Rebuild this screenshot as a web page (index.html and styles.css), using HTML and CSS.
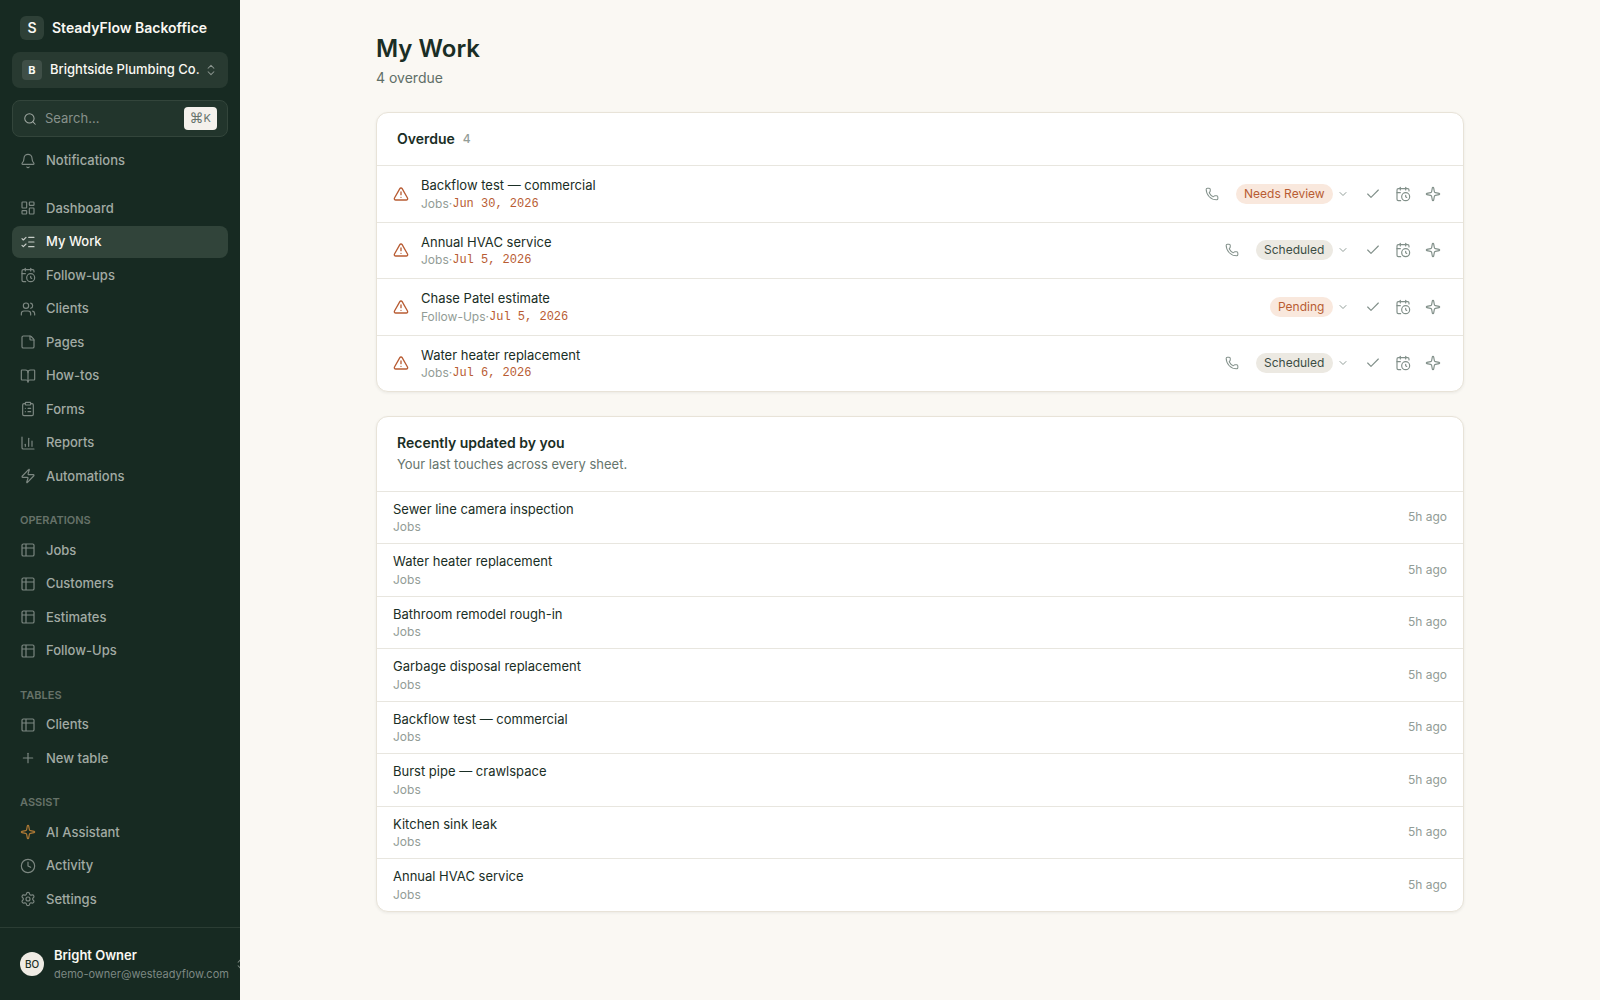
FILE: index.html
```html
<!DOCTYPE html>
<html lang="en">
<head>
    <meta charset="UTF-8">
    <meta name="viewport" content="width=device-width, initial-scale=1.0">
    <title>My Work - SteadyFlow Backoffice</title>
    <link rel="stylesheet" href="styles.css">
</head>
<body>

<svg class="sprite" aria-hidden="true">
    <symbol id="updown" viewBox="0 0 24 24"><path d="m7 15 5 5 5-5"/><path d="m7 9 5-5 5 5"/></symbol>
    <symbol id="search" viewBox="0 0 24 24"><path d="m21 21-4.34-4.34"/><circle cx="11" cy="11" r="8"/></symbol>
    <symbol id="bell" viewBox="0 0 24 24"><path d="M10.268 21a2 2 0 0 0 3.464 0"/><path d="M3.262 15.326A1 1 0 0 0 4 17h16a1 1 0 0 0 .74-1.673C19.41 13.956 18 12.499 18 8A6 6 0 0 0 6 8c0 4.499-1.411 5.956-2.738 7.326"/></symbol>
    <symbol id="dashboard" viewBox="0 0 24 24"><rect width="7" height="9" x="3" y="3" rx="1"/><rect width="7" height="5" x="14" y="3" rx="1"/><rect width="7" height="9" x="14" y="12" rx="1"/><rect width="7" height="5" x="3" y="16" rx="1"/></symbol>
    <symbol id="checks" viewBox="0 0 24 24"><path d="M13 5h8"/><path d="M13 12h8"/><path d="M13 19h8"/><path d="m3 17 2 2 4-4"/><path d="m3 7 2 2 4-4"/></symbol>
    <symbol id="calendar" viewBox="0 0 24 24"><path d="M16 14v2.2l1.6 1"/><path d="M16 2v4"/><path d="M21 7.5V6a2 2 0 0 0-2-2H5a2 2 0 0 0-2 2v14a2 2 0 0 0 2 2h3.5"/><path d="M3 10h5"/><path d="M8 2v4"/><circle cx="16" cy="16" r="6"/></symbol>
    <symbol id="users" viewBox="0 0 24 24"><path d="M16 21v-2a4 4 0 0 0-4-4H6a4 4 0 0 0-4 4v2"/><path d="M16 3.128a4 4 0 0 1 0 7.744"/><path d="M22 21v-2a4 4 0 0 0-3-3.87"/><circle cx="9" cy="7" r="4"/></symbol>
    <symbol id="note" viewBox="0 0 24 24"><path d="M21 9a2.4 2.4 0 0 0-.706-1.706l-3.588-3.588A2.4 2.4 0 0 0 15 3H5a2 2 0 0 0-2 2v14a2 2 0 0 0 2 2h14a2 2 0 0 0 2-2z"/><path d="M15 3v5a1 1 0 0 0 1 1h5"/></symbol>
    <symbol id="book" viewBox="0 0 24 24"><path d="M12 7v14"/><path d="M3 18a1 1 0 0 1-1-1V4a1 1 0 0 1 1-1h5a4 4 0 0 1 4 4 4 4 0 0 1 4-4h5a1 1 0 0 1 1 1v13a1 1 0 0 1-1 1h-6a3 3 0 0 0-3 3 3 3 0 0 0-3-3z"/></symbol>
    <symbol id="clipboard" viewBox="0 0 24 24"><rect width="8" height="4" x="8" y="2" rx="1"/><path d="M16 4h2a2 2 0 0 1 2 2v14a2 2 0 0 1-2 2H6a2 2 0 0 1-2-2V6a2 2 0 0 1 2-2h2"/><path d="M12 11h4"/><path d="M12 16h4"/><path d="M8 11h.01"/><path d="M8 16h.01"/></symbol>
    <symbol id="chart" viewBox="0 0 24 24"><path d="M3 3v16a2 2 0 0 0 2 2h16"/><path d="M18 17V9"/><path d="M13 17V5"/><path d="M8 17v-3"/></symbol>
    <symbol id="zap" viewBox="0 0 24 24"><path d="M4 14a1 1 0 0 1-.78-1.63l9.9-10.2a.5.5 0 0 1 .86.46l-1.92 6.02A1 1 0 0 0 13 10h7a1 1 0 0 1 .78 1.63l-9.9 10.2a.5.5 0 0 1-.86-.46l1.92-6.02A1 1 0 0 0 11 14z"/></symbol>
    <symbol id="table" viewBox="0 0 24 24"><path d="M9 3H5a2 2 0 0 0-2 2v4m6-6h10a2 2 0 0 1 2 2v4M9 3v18m0 0h10a2 2 0 0 0 2-2V9M9 21H5a2 2 0 0 1-2-2V9m0 0h18"/></symbol>
    <symbol id="plus" viewBox="0 0 24 24"><path d="M5 12h14"/><path d="M12 5v14"/></symbol>
    <symbol id="sparkle" viewBox="0 0 24 24"><path d="M11.017 2.814a1 1 0 0 1 1.966 0l1.051 5.558a2 2 0 0 0 1.594 1.594l5.558 1.051a1 1 0 0 1 0 1.966l-5.558 1.051a2 2 0 0 0-1.594 1.594l-1.051 5.558a1 1 0 0 1-1.966 0l-1.051-5.558a2 2 0 0 0-1.594-1.594l-5.558-1.051a1 1 0 0 1 0-1.966l5.558-1.051a2 2 0 0 0 1.594-1.594z"/></symbol>
    <symbol id="clock" viewBox="0 0 24 24"><path d="M12 6v6l4 2"/><circle cx="12" cy="12" r="10"/></symbol>
    <symbol id="gear" viewBox="0 0 24 24"><path d="M9.671 4.136a2.34 2.34 0 0 1 4.659 0 2.34 2.34 0 0 0 3.319 1.915 2.34 2.34 0 0 1 2.33 4.033 2.34 2.34 0 0 0 0 3.831 2.34 2.34 0 0 1-2.33 4.033 2.34 2.34 0 0 0-3.319 1.915 2.34 2.34 0 0 1-4.659 0 2.34 2.34 0 0 0-3.32-1.915 2.34 2.34 0 0 1-2.33-4.033 2.34 2.34 0 0 0 0-3.831A2.34 2.34 0 0 1 6.35 6.051a2.34 2.34 0 0 0 3.319-1.915"/><circle cx="12" cy="12" r="3"/></symbol>
    <symbol id="alert" viewBox="0 0 24 24"><path d="m21.73 18-8-14a2 2 0 0 0-3.48 0l-8 14A2 2 0 0 0 4 21h16a2 2 0 0 0 1.73-3"/><path d="M12 9v4"/><path d="M12 17h.01"/></symbol>
    <symbol id="phone" viewBox="0 0 24 24"><path d="M13.832 16.568a1 1 0 0 0 1.213-.303l.355-.465A2 2 0 0 1 17 15h3a2 2 0 0 1 2 2v3a2 2 0 0 1-2 2A18 18 0 0 1 2 4a2 2 0 0 1 2-2h3a2 2 0 0 1 2 2v3a2 2 0 0 1-.8 1.6l-.468.351a1 1 0 0 0-.292 1.233 14 14 0 0 0 6.392 6.384"/></symbol>
    <symbol id="down" viewBox="0 0 24 24"><path d="m6 9 6 6 6-6"/></symbol>
    <symbol id="check" viewBox="0 0 24 24"><path d="M20 6 9 17l-5-5"/></symbol>
</svg>

<div class="app">
    <aside class="sidebar">
        <div class="sidebar-top">
            <div class="brand"><span class="brand-mark">S</span>SteadyFlow Backoffice</div>
            <button class="workspace" type="button">
                <span class="workspace-mark">B</span>
                <span class="workspace-name">Brightside Plumbing Co.</span>
                <svg class="icon icon-sm"><use href="#updown"/></svg>
            </button>
            <label class="search">
                <svg class="icon icon-sm"><use href="#search"/></svg>
                <input type="text" placeholder="Search..." aria-label="Search">
                <kbd><span class="cmd">⌘</span>K</kbd>
            </label>
        </div>

        <nav class="nav">
            <div class="nav-group">
                <a class="nav-item" href="#"><svg class="icon"><use href="#bell"/></svg>Notifications</a>
            </div>
            <div class="nav-group">
                <a class="nav-item" href="#"><svg class="icon"><use href="#dashboard"/></svg>Dashboard</a>
                <a class="nav-item active" href="#" aria-current="page"><svg class="icon"><use href="#checks"/></svg>My Work</a>
                <a class="nav-item" href="#"><svg class="icon"><use href="#calendar"/></svg>Follow-ups</a>
                <a class="nav-item" href="#"><svg class="icon"><use href="#users"/></svg>Clients</a>
                <a class="nav-item" href="#"><svg class="icon"><use href="#note"/></svg>Pages</a>
                <a class="nav-item" href="#"><svg class="icon"><use href="#book"/></svg>How-tos</a>
                <a class="nav-item" href="#"><svg class="icon"><use href="#clipboard"/></svg>Forms</a>
                <a class="nav-item" href="#"><svg class="icon"><use href="#chart"/></svg>Reports</a>
                <a class="nav-item" href="#"><svg class="icon"><use href="#zap"/></svg>Automations</a>
            </div>
            <div class="nav-group">
                <h2 class="nav-title">Operations</h2>
                <a class="nav-item" href="#"><svg class="icon"><use href="#table"/></svg>Jobs</a>
                <a class="nav-item" href="#"><svg class="icon"><use href="#table"/></svg>Customers</a>
                <a class="nav-item" href="#"><svg class="icon"><use href="#table"/></svg>Estimates</a>
                <a class="nav-item" href="#"><svg class="icon"><use href="#table"/></svg>Follow-Ups</a>
            </div>
            <div class="nav-group">
                <h2 class="nav-title">Tables</h2>
                <a class="nav-item" href="#"><svg class="icon"><use href="#table"/></svg>Clients</a>
                <a class="nav-item" href="#"><svg class="icon"><use href="#plus"/></svg>New table</a>
            </div>
            <div class="nav-group">
                <h2 class="nav-title">Assist</h2>
                <a class="nav-item assistant" href="#"><svg class="icon"><use href="#sparkle"/></svg>AI Assistant</a>
                <a class="nav-item" href="#"><svg class="icon"><use href="#clock"/></svg>Activity</a>
                <a class="nav-item" href="#"><svg class="icon"><use href="#gear"/></svg>Settings</a>
            </div>
        </nav>

        <div class="sidebar-footer">
            <button class="account" type="button">
                <span class="avatar">BO</span>
                <span class="account-text">
                    <span class="account-name">Bright Owner</span>
                    <span class="account-email">demo-owner@westeadyflow.com</span>
                </span>
                <svg class="icon icon-sm"><use href="#updown"/></svg>
            </button>
        </div>
    </aside>

    <main class="main">
        <div class="content">
            <header class="page-header">
                <h1>My Work</h1>
                <p>4 overdue</p>
            </header>

            <section class="card">
                <div class="card-header">
                    <h2>Overdue <span class="count">4</span></h2>
                </div>
                <ul class="rows">
                    <li class="row task">
                        <svg class="icon alert"><use href="#alert"/></svg>
                        <div class="row-text">
                            <a class="row-title" href="#">Backflow test — commercial</a>
                            <div class="row-meta">Jobs<span class="dot">·</span><time class="due">Jun 30, 2026</time></div>
                        </div>
                        <button class="icon-btn" type="button" aria-label="Call"><svg class="icon icon-sm"><use href="#phone"/></svg></button>
                        <label class="status">
                            <select class="pill pill-warn" aria-label="Status"><option>Needs Review</option></select>
                            <svg class="icon icon-xs"><use href="#down"/></svg>
                        </label>
                        <div class="actions">
                            <button class="icon-btn" type="button" aria-label="Mark done"><svg class="icon"><use href="#check"/></svg></button>
                            <button class="icon-btn" type="button" aria-label="Reschedule"><svg class="icon"><use href="#calendar"/></svg></button>
                            <button class="icon-btn" type="button" aria-label="Ask AI"><svg class="icon"><use href="#sparkle"/></svg></button>
                        </div>
                    </li>
                    <li class="row task">
                        <svg class="icon alert"><use href="#alert"/></svg>
                        <div class="row-text">
                            <a class="row-title" href="#">Annual HVAC service</a>
                            <div class="row-meta">Jobs<span class="dot">·</span><time class="due">Jul 5, 2026</time></div>
                        </div>
                        <button class="icon-btn" type="button" aria-label="Call"><svg class="icon icon-sm"><use href="#phone"/></svg></button>
                        <label class="status">
                            <select class="pill" aria-label="Status"><option>Scheduled</option></select>
                            <svg class="icon icon-xs"><use href="#down"/></svg>
                        </label>
                        <div class="actions">
                            <button class="icon-btn" type="button" aria-label="Mark done"><svg class="icon"><use href="#check"/></svg></button>
                            <button class="icon-btn" type="button" aria-label="Reschedule"><svg class="icon"><use href="#calendar"/></svg></button>
                            <button class="icon-btn" type="button" aria-label="Ask AI"><svg class="icon"><use href="#sparkle"/></svg></button>
                        </div>
                    </li>
                    <li class="row task">
                        <svg class="icon alert"><use href="#alert"/></svg>
                        <div class="row-text">
                            <a class="row-title" href="#">Chase Patel estimate</a>
                            <div class="row-meta">Follow-Ups<span class="dot">·</span><time class="due">Jul 5, 2026</time></div>
                        </div>
                        <label class="status">
                            <select class="pill pill-warn" aria-label="Status"><option>Pending</option></select>
                            <svg class="icon icon-xs"><use href="#down"/></svg>
                        </label>
                        <div class="actions">
                            <button class="icon-btn" type="button" aria-label="Mark done"><svg class="icon"><use href="#check"/></svg></button>
                            <button class="icon-btn" type="button" aria-label="Reschedule"><svg class="icon"><use href="#calendar"/></svg></button>
                            <button class="icon-btn" type="button" aria-label="Ask AI"><svg class="icon"><use href="#sparkle"/></svg></button>
                        </div>
                    </li>
                    <li class="row task">
                        <svg class="icon alert"><use href="#alert"/></svg>
                        <div class="row-text">
                            <a class="row-title" href="#">Water heater replacement</a>
                            <div class="row-meta">Jobs<span class="dot">·</span><time class="due">Jul 6, 2026</time></div>
                        </div>
                        <button class="icon-btn" type="button" aria-label="Call"><svg class="icon icon-sm"><use href="#phone"/></svg></button>
                        <label class="status">
                            <select class="pill" aria-label="Status"><option>Scheduled</option></select>
                            <svg class="icon icon-xs"><use href="#down"/></svg>
                        </label>
                        <div class="actions">
                            <button class="icon-btn" type="button" aria-label="Mark done"><svg class="icon"><use href="#check"/></svg></button>
                            <button class="icon-btn" type="button" aria-label="Reschedule"><svg class="icon"><use href="#calendar"/></svg></button>
                            <button class="icon-btn" type="button" aria-label="Ask AI"><svg class="icon"><use href="#sparkle"/></svg></button>
                        </div>
                    </li>
                </ul>
            </section>

            <section class="card">
                <div class="card-header">
                    <h2>Recently updated by you</h2>
                    <p>Your last touches across every sheet.</p>
                </div>
                <ul class="rows">
                    <li class="row">
                        <div class="row-text"><a class="row-title" href="#">Sewer line camera inspection</a><div class="row-meta">Jobs</div></div>
                        <time class="ago">5h ago</time>
                    </li>
                    <li class="row">
                        <div class="row-text"><a class="row-title" href="#">Water heater replacement</a><div class="row-meta">Jobs</div></div>
                        <time class="ago">5h ago</time>
                    </li>
                    <li class="row">
                        <div class="row-text"><a class="row-title" href="#">Bathroom remodel rough-in</a><div class="row-meta">Jobs</div></div>
                        <time class="ago">5h ago</time>
                    </li>
                    <li class="row">
                        <div class="row-text"><a class="row-title" href="#">Garbage disposal replacement</a><div class="row-meta">Jobs</div></div>
                        <time class="ago">5h ago</time>
                    </li>
                    <li class="row">
                        <div class="row-text"><a class="row-title" href="#">Backflow test — commercial</a><div class="row-meta">Jobs</div></div>
                        <time class="ago">5h ago</time>
                    </li>
                    <li class="row">
                        <div class="row-text"><a class="row-title" href="#">Burst pipe — crawlspace</a><div class="row-meta">Jobs</div></div>
                        <time class="ago">5h ago</time>
                    </li>
                    <li class="row">
                        <div class="row-text"><a class="row-title" href="#">Kitchen sink leak</a><div class="row-meta">Jobs</div></div>
                        <time class="ago">5h ago</time>
                    </li>
                    <li class="row">
                        <div class="row-text"><a class="row-title" href="#">Annual HVAC service</a><div class="row-meta">Jobs</div></div>
                        <time class="ago">5h ago</time>
                    </li>
                </ul>
            </section>
        </div>
    </main>
</div>

</body>
</html>
```
FILE: styles.css
```css
* {
    box-sizing: border-box;
}
body {
    margin: 0;
    background: #faf8f3;
    color: #1a2e25;
    font-family: Inter, "Liberation Sans", sans-serif;
    font-size: 13px;
    line-height: 1.5;
}
h1, h2, p, ul {
    margin: 0;
    padding: 0;
}
a {
    color: inherit;
    text-decoration: none;
}
button, input, select {
    font: inherit;
    color: inherit;
    border: none;
    background: none;
    padding: 0;
    margin: 0;
}
button, select {
    cursor: pointer;
}
.sprite {
    display: none;
}
.icon {
    width: 16px;
    height: 16px;
    flex-shrink: 0;
    fill: none;
    stroke: currentColor;
    stroke-width: 1.75;
    stroke-linecap: round;
    stroke-linejoin: round;
}
.icon-sm {
    width: 14px;
    height: 14px;
}
.icon-xs {
    width: 12px;
    height: 12px;
}
.app {
    display: flex;
    min-height: 100vh;
}

/* sidebar */
.sidebar {
    position: sticky;
    top: 0;
    display: flex;
    flex-direction: column;
    flex-shrink: 0;
    width: 240px;
    height: 100vh;
    overflow: hidden;
    background: #172a22;
    color: #a2aaa4;
}
.sidebar-top {
    display: flex;
    flex-direction: column;
    gap: 12px;
    padding: 16px 12px 8px;
}
.brand {
    display: flex;
    align-items: center;
    gap: 8px;
    padding: 0 8px;
    line-height: 24px;
    font-size: 14px;
    font-weight: 600;
    color: #faf8f3;
    white-space: nowrap;
}
.brand-mark {
    width: 24px;
    height: 24px;
    border-radius: 6px;
    background: #2e4037;
    text-align: center;
}
.workspace {
    display: flex;
    align-items: center;
    gap: 8px;
    height: 36px;
    padding: 0 10px;
    border-radius: 8px;
    background: #283a31;
    color: #faf8f3;
    font-weight: 500;
    text-align: left;
    white-space: nowrap;
}
.workspace-mark {
    flex-shrink: 0;
    width: 20px;
    height: 20px;
    border-radius: 4px;
    background: #3f4f47;
    font-size: 11px;
    font-weight: 700;
    line-height: 20px;
    text-align: center;
}
.workspace-name {
    flex: 1;
    min-width: 0;
}
.workspace .icon {
    color: #8b958f;
}
.search {
    display: flex;
    align-items: center;
    gap: 8px;
    height: 37px;
    padding: 0 10px;
    border: 1px solid #33453b;
    border-radius: 8px;
    background: #22352c;
}
.search input {
    flex: 1;
    min-width: 0;
    outline: none;
}
.search input::placeholder {
    color: #87918b;
    opacity: 1;
}
.search kbd {
    display: flex;
    align-items: center;
    height: 23px;
    padding: 0 6px;
    border-radius: 4px;
    background: #f4f1ec;
    color: #66736c;
    font-family: inherit;
    font-size: 11px;
}
.cmd {
    font-family: "DejaVu Sans", sans-serif;
    font-size: 14px;
}
.nav {
    display: flex;
    flex-direction: column;
    flex: 1;
    gap: 16px;
    min-height: 0;
    padding: 0 12px;
    overflow: hidden;
}
.nav-group {
    display: flex;
    flex-direction: column;
    gap: 2px;
}
.nav-title {
    padding: 4px 8px;
    font-size: 11px;
    font-weight: 600;
    text-transform: uppercase;
    color: #667269;
}
.nav-item {
    display: flex;
    align-items: center;
    gap: 10px;
    padding: 6px 8px;
    border-radius: 8px;
    font-weight: 500;
}
.nav-item .icon {
    color: #7d8882;
}
.nav-item.active {
    background: #31443a;
    color: #faf8f3;
}
.nav-item.active .icon {
    color: #c8cdc8;
}
.nav-item.assistant .icon {
    color: #b07a35;
}
.sidebar-footer {
    padding: 12px;
    border-top: 1px solid #2b3d34;
}
.account {
    display: flex;
    align-items: center;
    gap: 10px;
    padding: 6px 8px;
    text-align: left;
    white-space: nowrap;
}
.account .icon {
    color: #7d8882;
}
.avatar {
    flex-shrink: 0;
    width: 24px;
    height: 24px;
    border-radius: 50%;
    background: #efebe4;
    color: #1a2e25;
    font-size: 10px;
    font-weight: 500;
    line-height: 24px;
    text-align: center;
}
.account-text {
    display: flex;
    flex-direction: column;
    flex-shrink: 0;
    width: 170px;
}
.account-name {
    font-weight: 600;
    color: #faf8f3;
}
.account-email {
    font-size: 11px;
    color: #7d8882;
}

/* page */
.main {
    flex: 1;
    min-width: 0;
}
.content {
    display: flex;
    flex-direction: column;
    gap: 24px;
    max-width: 1152px;
    margin: 0 auto;
    padding: 32px;
}
.page-header h1 {
    font-size: 24px;
    font-weight: 600;
    line-height: 34px;
}
.page-header p {
    margin-top: 2px;
    font-size: 14px;
    line-height: 20px;
    color: #5f6f67;
}
.card {
    border: 1px solid #e8e3d8;
    border-radius: 12px;
    background: #fff;
    box-shadow: 0 1px 3px rgba(26, 46, 37, 0.07);
}
.card-header {
    padding: 16px 20px;
    border-bottom: 1px solid #e8e6df;
}
.card-header h2 {
    display: flex;
    align-items: center;
    gap: 8px;
    font-size: 14px;
    font-weight: 600;
    line-height: 20px;
}
.card-header p {
    margin-top: 2px;
    color: #66756d;
}
.count {
    font-size: 12px;
    font-weight: 500;
    color: #939d97;
}
.rows {
    list-style: none;
}
.row {
    display: flex;
    align-items: center;
    gap: 8px;
    padding: 8px 16px;
    border-bottom: 1px solid #e8e6df;
}
.row:last-child {
    border-bottom: none;
}
.task {
    padding: 10px 16px;
}
.alert {
    margin-right: 4px;
    color: #b85c33;
    stroke-width: 2;
}
.row-text {
    flex: 1;
    min-width: 0;
}
.row-title {
    display: block;
}
.row-meta {
    display: flex;
    font-size: 12px;
    line-height: 16px;
    color: #929c96;
}
.due {
    font-family: "Liberation Mono", monospace;
    color: #b85c33;
}
.ago {
    font-size: 12px;
    color: #929c96;
}
.icon-btn {
    display: flex;
    align-items: center;
    justify-content: center;
    width: 28px;
    height: 28px;
    border-radius: 6px;
    color: #82908a;
}
.actions {
    display: flex;
    gap: 2px;
}
.status {
    display: flex;
    align-items: center;
    gap: 4px;
    padding: 0 2px;
    color: #82908a;
}
.pill {
    appearance: none;
    height: 20px;
    padding: 0 8px;
    border-radius: 10px;
    background: #ece9e2;
    color: #3b4d44;
    font-size: 12px;
    line-height: 20px;
}
.pill-warn {
    background: #f9e8dd;
    color: #b85c33;
}
```
